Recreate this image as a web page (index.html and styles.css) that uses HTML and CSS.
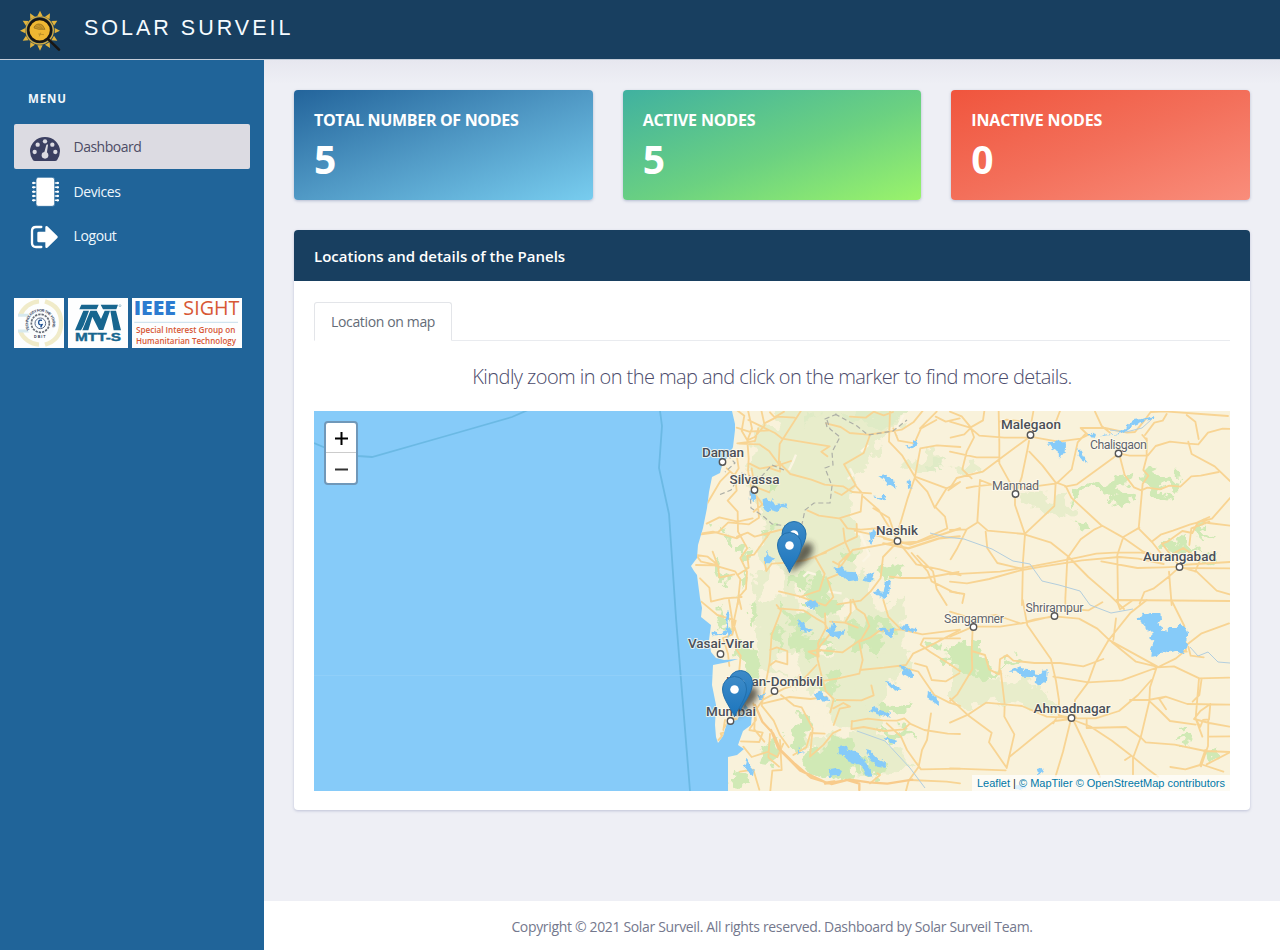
FILE: index.html
```html
<!DOCTYPE html>
<html lang="en">
<head>
<meta charset="utf-8">
<title>Solar Surveil</title>
<link rel="stylesheet" href="styles.css">
</head>
<body>
<header class="topbar">
  <svg class="logo" width="42" height="42" viewBox="0 0 126 126">
    <g fill="#e2b33c">
      <g id="rays"><path id="ray" d="M55 18 63 2 71 18z"/><use href="#ray" transform="rotate(30 63 62)"/><use href="#ray" transform="rotate(60 63 62)"/></g>
      <use href="#rays" transform="rotate(90 63 62)"/><use href="#rays" transform="rotate(180 63 62)"/><use href="#rays" transform="rotate(270 63 62)"/>
    </g>
    <circle cx="62" cy="61" r="41" fill="none" stroke="#d6ac40" stroke-width="4"/>
    <path d="m89 89 31 30" stroke="#181613" stroke-width="8" stroke-linecap="round"/>
    <circle cx="62" cy="61" r="34" fill="#efb732" stroke="#181613" stroke-width="7"/>
    <path d="M47 48q10-11 24-2l7 12H59L45 54z" fill="#c99628" stroke="#8a671d" stroke-width="2"/>
    <path d="m49 49 22 8M57 43l14 13M58 72l17 2m-10-6-4 11" stroke="#a67f24" stroke-width="2" fill="none"/>
  </svg>
  <span class="brand">SOLAR SURVEIL</span>
</header>
<div class="shell">
  <nav class="sidebar">
    <div class="menu-title">MENU</div>
    <a class="item active">
      <svg width="32" height="28" viewBox="0 0 96 84"><path d="M12 79Q3 65 3 52A45 43 0 0 1 93 52q0 13-9 27-2 2-6 2H18q-4 0-6-2z" fill="#3b3f61"/><g fill="#dcdbe2"><circle cx="17" cy="54" r="6.500"/><circle cx="26" cy="32" r="6.500"/><circle cx="48" cy="22" r="6.500"/><circle cx="70" cy="32" r="6.500"/><circle cx="79" cy="54" r="6.500"/><circle cx="48" cy="64" r="10"/><path d="m45 58 7-25q3-4 5 0l-4 28z"/></g></svg>
      <span>Dashboard</span></a>
    <a class="item">
      <svg width="32" height="30" viewBox="0 0 96 90"><g stroke="#fff" stroke-width="4.5" stroke-linecap="round"><path d="M11 18h77M11 31h77M11 44h77M11 57h77M11 70h77"/></g><g fill="#fff"><circle cx="14" cy="18" r="3.500"/><circle cx="14" cy="31" r="3.500"/><circle cx="14" cy="44" r="3.500"/><circle cx="14" cy="57" r="3.500"/><circle cx="14" cy="70" r="3.500"/><circle cx="86" cy="18" r="3.500"/><circle cx="86" cy="31" r="3.500"/><circle cx="86" cy="44" r="3.500"/><circle cx="86" cy="57" r="3.500"/><circle cx="86" cy="70" r="3.500"/></g><rect x="21" y="1" width="56" height="87" rx="8" fill="#fff" stroke="#206499" stroke-width="2"/></svg>
      <span>Devices</span></a>
    <a class="item">
      <svg width="32" height="28" viewBox="0 0 96 84"><path d="M37 12H21Q9 12 9 24v36q0 12 12 12h16" fill="none" stroke="#fff" stroke-width="7" stroke-linecap="round"/><path d="M25 30q0-4 4-4h20V12q1-5 6-2l30 29q3 3 0 6L55 74q-5 3-6-2V58H29q-4 0-4-4z" fill="#fff"/></svg>
      <span>Logout</span></a>
    <div class="partners">
      <svg width="50" height="50" viewBox="0 0 150 150"><path fill="#fdfefe" d="M0 0h150v150H0z"/><path d="M75 10A66 66 0 0 0 18 53M18 99a66 66 0 0 0 57 41M93 10q46 14 48 58v14q-3 44-48 58" fill="none" stroke="#f0ebc9" stroke-width="13"/><path d="M12 52h46M12 99h46" stroke="#d7e9ee" stroke-width="9"/><circle cx="79" cy="76" r="44" fill="#fbfcfc"/><path id="ring" d="M47 96A37 37 0 1 1 111 96" fill="none"/><text class="seal"><textPath href="#ring" textLength="146">TECHNOLOGY FOR THE YOUNG</textPath></text><text class="seal" x="60" y="121">D B I T</text><circle cx="79" cy="76" r="27" fill="none" stroke="#676d78" stroke-width="5" stroke-dasharray="7 3"/><circle cx="79" cy="76" r="16" fill="#f8fcff" stroke="#5d6c8a" stroke-width="3"/><path d="M84 67q-10-3-10 7 0 8 10 6l-4 8" fill="none" stroke="#174b91" stroke-width="4"/></svg>
      <svg width="60" height="50" viewBox="0 0 180 150"><path fill="#fdfefe" d="M0 0h180v150H0z"/><g fill="#17668f"><path d="M40 20h52l-6 14H34z"/><path d="M46 38h17L47 82l-8 15H21zM67 38h19l13 25 11-25h16l-20 58H93L73 56 61 97H43z"/><path d="M98 20h52l-5 14h-40zM127 38h17l15 59h-22z"/></g><text class="mtt" x="21" y="129" textLength="138" lengthAdjust="spacingAndGlyphs">MTT-S</text><circle cx="156" cy="23" r="3" fill="none" stroke="#17668f"/></svg>
      <svg width="110" height="50" viewBox="0 0 330 150"><path fill="#fdfefe" d="M0 0h330v150H0z"/><text class="ieee" x="5" y="50" textLength="127" lengthAdjust="spacingAndGlyphs">IEEE</text><text class="sight" x="154" y="50" textLength="168" lengthAdjust="spacingAndGlyphs">SIGHT</text><path d="M7 73h311" stroke="#aacbe2" stroke-width="2"/><text class="small" x="12" y="106" textLength="298" lengthAdjust="spacingAndGlyphs">Special Interest Group on</text><text class="small" x="12" y="137" textLength="300" lengthAdjust="spacingAndGlyphs">Humanitarian Technology</text></svg>
    </div>
  </nav>
  <div class="page">
    <main class="content">
      <section class="stats">
        <div class="stat blue"><h2>TOTAL NUMBER OF NODES</h2><b>5</b></div>
        <div class="stat green"><h2>ACTIVE NODES</h2><b>5</b></div>
        <div class="stat red"><h2>INACTIVE NODES</h2><b>0</b></div>
      </section>
      <section class="panel">
        <h3 class="panel-head">Locations and details of the Panels</h3>
        <div class="panel-body">
          <div class="tabs"><span class="tab">Location on map</span></div>
          <p class="hint">Kindly zoom in on the map and click on the marker to find more details.</p>
          <div class="map">
<svg class="tiles" width="916" height="380" viewBox="314 411 916 380">
<defs>
  <linearGradient id="pin" x2="0" y2="1"><stop stop-color="#3d8bc8"/><stop offset="1" stop-color="#1b75bd"/></linearGradient>
  <filter id="soft" x="-80%" y="-80%" width="260%" height="260%"><feGaussianBlur stdDeviation="3"/></filter>
  <filter id="rough" x="0" y="0" width="100%" height="100%"><feTurbulence type="fractalNoise" baseFrequency=".07" numOctaves="3" seed="4"/><feDisplacementMap in="SourceGraphic" scale="26" xChannelSelector="R" yChannelSelector="G"/></filter>
  <filter id="rough-lake" x="0" y="0" width="100%" height="100%"><feTurbulence type="fractalNoise" baseFrequency=".22" numOctaves="2" seed="9"/><feDisplacementMap in="SourceGraphic" scale="5" xChannelSelector="R" yChannelSelector="G"/></filter>
  <g id="marker"><path d="M12.500 40.500C11 35 .5 23.500 .5 13A12 12.500 0 0 1 24.500 13C24.500 23.500 14 35 12.500 40.500z" fill="url(#pin)" stroke="#226fab"/><circle cx="12.500" cy="13.500" r="4.300" fill="#fff"/></g>
  <path id="shade" d="M12 40Q17 21 25 12q11-4 11 5-1 11-23 23z" fill="#332e26" opacity=".75" filter="url(#soft)"/>
  <path id="coast" d="M732 400V411l3 13 0 6-2 17-4 9-6 6-3 11-8 4-3 15-2 16-4 20-5 17-1 13-6 8 3 5 3 4 1 8 2 15 2 10-1 9 10 8-2 15 2 12 5 6 8 2 14-1-10 3-15 3-1 20 4 20-1 20 1 12 2 6 5-7 4-13 10-3 5-8 3-8 7 10-1 11-8 6-5 14 6 4-7 6-9 2V810H1250V400z"/>
  <clipPath id="land"><use href="#coast"/></clipPath>
</defs>
<path fill="#86cbf9" d="M314 411h916v380H314z"/>
<path d="M314 443l14 6 30 7 14 1 74-21 66-19 16-7M660 411l2 15-3 42 10 46 7 104 14 173" fill="none" stroke="#6bb9e4" stroke-width="1.800"/>
<path d="M314 675.500h400" stroke="#95d1f9" stroke-width=".7"/>
<use href="#coast" fill="#f9f2db"/>
<g clip-path="url(#land)">
  <g filter="url(#rough)">
  <path d="M680 390h580v430H680z" fill="none"/>
  <g fill="#e8edcb">
    <path d="M775 395h130l-5 32-20 8-6 18-20 27-4 34 11 26 2 35 20 37 22-17 2 42-20 44-10 55-38-10-32-40-46-15-8-70 10-70-15-60 8-42 24-6z"/>
    <path d="M1025 491l35 6 15 16-10 8-20-10-23-8zM950 648l30 4 12 23 35 8 22 10 10 22-53-12-40 5-16-9zM857 660l50-13 5 17-40 40-20-10zM950 468l22-7 14 9-20 4zM905 466l29-13 15 6-20 15zM805 740l70-10 40 30-20 15-70-5z"/>
  </g>
  <g fill="#f9f2db"><path d="M770 560l14 8-4 30-18 6zM795 590l16-6 12 20-22 12zM812 636l22 5-4 18-25-6zM778 650l18-2 8 30-22 8zM838 600l14 5-6 22-16-8zM850 560l14-10 8 18-14 8zM780 700l26 14-8 24-20-4zM817 690l14 4-4 30-12-8z"/></g>
  <g transform="translate(670 405) scale(.333333)" fill="#d0e9b5">
    <path d="M141 354l24 8 6 23-35-6zM205 420l39 9-18 31-32-10zM150 450l18 5-12 42 20 34-29 23-8-40zM170 390l22 13-20 14zM225 500l13-6-4 49-20 15zM268 370l28-8 18 15-8 18-24-4zM370 510l48-12 8 36-34 20-36-9zM408 570l70 12-8 18-80-2zM627 490l58-30 12 22-10 35-42 10-7-16-15 4zM508 434l40-14 14 27-8 24-45-8zM300 220l40 15-20 30-33-3zM455 500l35 30-15 50-50 10-18-30z"/>
    <path fill="#dfebc6" d="M505 25l50-5 52 2 60-10 38 20-34 35-20 3-48-8-10-10-49-6zM770 174l64-19-10 40-10-14-25 28-20-6zM420 30l22-5-5 14-23 27z"/>
  </g>
  <g transform="translate(670 600) scale(.333333)" fill="#d0e9b5">
    <path d="M149 10l14 35 20 55-25-8-15-50zM198 118l43 18 42 55-18 48-38-21-32-40zM244 0l22 30-18 30-9-29zM330 20l85 30-10 62-35-12-22-50zM317 85l30 10-19 55-9-10zM360 100l60 10 70 10-20 45-40 10-54-16zM458 230l46-20 7 25-18 50-37-13zM390 320l32 50-8 75-28 12-35-49 25-38zM286 425l29-8 24 57-52 33-21-25zM186 515l45 23-25 32-26-3zM440 450l60-40 42 8 5 28 20 25 12 33-35 20-70 7-35-6-28-9-16-30zM570 480l60 5 20 30-40 15zM540 90l60-43 24 24 36-14 7 25-40 26 17 15-25 31-60-8zM607 325l56-12 61 10-53 30zM760 125l47-4-6 33-44-11zM620 380l72 10 45 30-70-8zM425 0l80 0-25 50-38-20z"/>
  </g>
  <g transform="translate(950 405) scale(.333333)" fill="#d0e9b5">
    <path d="M370 264l62-38 42 4 68-18-8 32-38 9 54 27-24 11-48-10-6-22-57-7-23 35-26 21zM572 202l24-5 26 14 76 8-16 16-35 3-8 9 31 15-9 25-39-8-22-23-22-16zM377 340l35 7 10 30-32-9zM633 411l42-12 35 6 4 20 36 8-14 13-35-10-65-5zM738 363l31-8-11 24 45 25-25-4-45-11zM770 440l42 2-27 35-24-18z"/>
  </g>
  <g transform="translate(950 600) scale(.333333)" fill="#d0e9b5">
    <path d="M-20 150l65-28 40 20 20 35 34 30 48-8-32 12-62 25-50-22-17-26-36 8zM678 382l25-7 18 7-33 15zM667 418l36-8 13 18-21 8zM766 440l30 12-4 40-17-7zM155 187l44-8 20 15-52 11z"/>
  </g>
  </g>
  <g transform="translate(670 405) scale(.333333)" fill="none" stroke="#fbf5e3" stroke-width="7">
    <path d="M357 195l12-24 9-22M555 380l18 10 25 60-20 20M540 190l10 20-17 12M400 515l14-13 24 7M475 560l40 5M700 30l-20 42M595 120l-22 20"/>
  </g>
  <!-- roads, north-west -->
  <g class="roads" transform="translate(670 405) scale(.333333)">
    <path d="M200 15l23 17-8 45 17 29 4 55-2 35 10 55 18 32 5 55-30 20-62-6-30 29-51 7M234 16l12 55-14 35 22-10 30-35-10-45M235 45l80 39 22 17 142 23-25 16 18 14M265 70l-10 38-48 8 61 2 30 21 28 38 3-60 63-98M283 55l40-20 51 3M200 68l37 12 60-4M202 115l42-5M239 176l30 15 55-10 39-13M325 170l36 37 63 17 40 15 55 5 28 17 56 4M170 190l25 22 5 45-27 30 30 33 1 60 28 50-21 29 20 41-3 52-22 25 8 35M180 200l-30 30-38 65M200 150l6 40-14 22M245 190l8 55 45 17M248 340l-45 10-55-13-38 19M251 320l27-22-21-28M201 395l32-12 21 12 75-20 28-5M78 450l35 5 32 26-52-11zM78 480l55 1 62 18 16 24-8 75M95 385l34-5 72 20 19-12M128 440l16 43 4 35 45-10M90 520l28 28 5 42 40-10 52-4M302 380l-50 69-20 4 4 35-34 22M284 470l5 28 16-22 50-3 53-8 24-8 90-44 39-18-1-38M468 55l44 11 27 18 56 5 35-5 65-10 35-22 30-37M540 35l47 3 24-18 30 11 28-10M600 90l-19 54-59 34 17 30 18 32-42 30-20-9M555 240l22 25-5 55-65 20-60-8-35-16M510 340l22 30 41 4 60-5M520 370l5 40 15 33-32 30-4 35-32 13 18 55-23 26-78-28-62-15M660 20l-3 90 40 42 38 64-22 64-35 119M735 215l95 35 40-19M735 215l16-85 50-9 70 5M670 70l15 37 48 8 20-45 46-25M750 70l50-50M797 35l30 15 42-10M830 250l-36 58-22-48-37-40M795 305l30 30 7 35-89 40-57 4-52-19-80-18M870 231l-35 25M685 410l54 68 70 15 63 18M685 408l-46 48-7 63-30 40-30 28-70 11M686 406l-27-37-33-54-46-40M610 310l47 28 24 70M685 410l-137 25-35 48-24-13M725 444l48 55 12 30 60 30 23 6M660 515l34 4 72 0 100-18M830 600l-30-48-11-53-47-47M405 465l30-9 29 50-15 50-60 20M430 456l38-13M330 170l0 30-35-12M342 20l-28 17-14-15"/>
    <path d="M642 400l78 18 100-31 50-17M640 415l75 15 92-30 62-6" stroke-width="7"/>
  </g>
  <g class="roads" transform="translate(670 600) scale(.333333)">
    <path d="M94 5l48 40 55 17-10 42-28 10 15 48 4 36M177 0l8 50 3 50M205 0l-15 70 17 56-13 15 18 26-4 42M320 15l13 17-28 73-6 82-13 70-11 60 36 45 18 42 27 38M300 150l20-8 32 11 0 40-35-10-20 15M325 25l75 6 38 24 25 14 18 32-40 48 2 30 12 50 13 46 23 22-10 40M465 40l2 45-23 45 2 40-30-15 31-5 71 7 56-39 24-40-14-35-24-17-11-27M480 65l45 3 38 15M525 68l17-29 0-39M568 130l10 50-10 41-67 15-90 15-30 2 7-27M640 0l15 50 38 38-66 5-27 20-33 13M692 88l65 15 46-6 67-8M780 155l-28-21 9-19 109 0M870 90l-82 43-59 28-21 34-66 8-72 7M690 200l55 15 48 70 45 23 32 10M735 190l35 10 15 40 43 4 40-24M780 155l55 35 35 24M500 300l74 1 37-15-7-30M490 325l30-16 20 11-31 6-18 49M545 365l48-9 45 5 43 1 22-7 17 15-18 18-59 5-62-12-37 6 2-24M718 370l45 20 70 11 37 1M783 340l-12 80-15 30-10 50-30 42-8 30M650 370l43 40 18 40 25 35 17 23 117-2M280 310l79-19 63 6 48-7M333 285l40 32 22 5 33 63-8 85 41-36 28-35 22-10M440 195l-52 56-46 15-63 33-24 34-2 55 30 37M370 465l39-23 13-43 42 2M250 310l8 50-18 25M238 390l40 8-10 28-55-2M163 382l22-28 40 11M140 455l15-43 17-22 23-3M145 420l35-38M210 515l40-6 18 60M330 420l5 90-28 2-6 60M220 440l25 31 47-15 30 15 18-40M300 402l-5 70 32 28M720 540l110 5 40 5M600 550l30-25-8-5M152 400l30-8 10 15-32 16zM165 360l-5 30"/>
    <path d="M255 315l22 50 32 35 23 50 43 42 48 41 61 19 46-12 38 11 0 19M303 390l22 55 65 66 78 37 25-4M465 551l75-12 57 8 55 4 75-12" stroke-width="7" stroke="#f8cb8b"/>
  </g>
  <g class="roads" transform="translate(950 405) scale(.333333)">
    <path d="M0 20l35 14 28 34-20 20-41 10M0 50l60 18 28 24 75 6 76 0M103 18l-4 28-37 21 10 30-22 43-13 53 28 27M146 18l2 95 0 62 47 85 0 40 30 88-6 80-3 132M150 50l20-6 45 5M240 95l-86 63-56 42-78 19-20 30M240 95l85 15 66-9 23-11-22-21 73 0 66 14 24-2 31-38 16-22 42-2 190 14M237 108l-5 27-17 82-18 48M238 140l39 41 40 52-4 70-90 85 80 25 50 40 62 63 65 56 42 40M320 235l-65 9-55 5M320 235l45-42 18-81 22-24M320 233l27 10 17 35 89 82 67 38 60 42 60 18M345 245l36-7 107-78 17-15M505 145l34 7 54 0 24-29 43-13 55 6 30 2 29-35 44-12 28 1M507 145l17 65 28 37 22 9 18-8 38 5 28-11 33 3 33-31 28-2 54-11M590 100l0 57-10 38 15 17-17 24-12 135 40 40 38 48M577 90l14 16M585 90l28-37 25-6 12-20M715 110l10 37 69 37 46 44M568 368l-48 28-18 54 2 144M352 460l-6 120 0 20M352 460l40-57 42-30 22-10M0 508l150-8 107-18 115-22 67-14 67-4 67 1 75 12M0 530l51 5 67-13 94-26 64-11 120-19 111-10 58 5 76 16M90 225l-8 125 31 27 110 10M0 375l50-2 31-20M50 373l-30 60-18 30M107 380l5 50 30 44 77 18M0 140l80 17 68 0M0 560l43 7-6 27M690 486l-54-70 16-6 45-32 30 6 17-33 34-15M607 409l25-20 37-12 50-18 67-18 54-62M760 350l15 4 65 8M690 485l-30 27-50 39-27 10-14 35M657 500l8 100M690 486l50 14 60 57 39 11M736 500l14-36-50-35-30 17M718 420l6-50 54-20M690 480l150-9M690 489l150 1M690 485l-48 2-80 2-108-20M435 20l20 43 25 20M710 30l26 20 10 52M310 70l20-52M250 20l-14 75M500 585l340 3M90 225l35 14-50 5-25 5"/>
  </g>
  <g class="roads" transform="translate(950 600) scale(.333333)">
    <path d="M0 35l65 20 73-10 75 26 101-24M0 110l70-30 80 0 64-10 40-12 67-10M68 84l-3 70 2 54-45 75-22 20M65 153l40 12 12 43 30 15 3-45 21-13 19 17 63 7 77 0 70 10 60-22M152 212l12 100-1 38 30 53-17 73-6 28M218 0l14 76 71 102 15 65 9 58-1 45 40 8M320 50l67 6 55 30 37 35 142 78M350 27l66 4 41-24M590 0l-50 40-64 80-40 68-22 60-39 52-2 44 6 10M310 230l105 17 100-6 110-40 53-26 30-25-5-72-39-78M710 155l-20-5 65-50 82-30M620 200l-62-15-72-58M622 202l50-3 76 36 90-2M620 202l-20 60-2 42-25 105-24 65 0 49M747 235l-10 120 20 55M715 140l7 27 39 5M367 355l70 0 70-22 57-48 40-45M540 300l55 0 52-10 65 22 128 2M600 305l30 28 30 30 77 11M648 290l-20 7 20 31M735 355l16 25 8-20 18-2 4-46-29 20-20 25 46 12 60 11M775 360l-1 78-21 61M776 410l64-1M570 410l17 17 87 7 92 19 73 3M766 450l-16 45-44 13-45-7M840 457l-70 36M367 354l45 94 38 83M370 360l50 19 66 43 62 48 46 38 30 22M410 360l0 24 118-3 42 31M365 354l-75-4-74-32-108-10-52 35-56 25M363 357l-49 6-55 42-81 66-8 32M363 357l-24 98-22 73M0 295l52 49 73 54-8 29 52 75M0 505l167 6M540 470l-15 10M760 495l60 20M755 235l-7 50-20 20M500 0l10 28 35-25M490 120l8-65M310 370l10-18"/>
  </g>
</g>
<path d="M827 420l3 9 10 8-8 15 1 13-8 3 7 18-2 17-16 0-9 7-3 14-15 2-15-2-9-8-12-8-1-18 8-11-17-6-10 17-12 5M784 470l-12-5-10 11-19 4M827 427l-2-8 12-5M835 414l22 12 11 9 25-4 14-11M727 455l8 8-10 9" fill="none" stroke="#adafa7" stroke-dasharray="5 3" stroke-width="1.200"/>
<g fill="none" stroke="#b3cede"><path d="M930 533l15 4 19 2 28 10 21 12 17 3 12 17 17 4 21 6 10 14 21 8 22-4M857 731l28 10 25 27 15 20M1190 647l8 9 10-4 10 10 12 1M1110 430l16 2 16-4 10-9"/></g>
<g fill="#86cbf9" filter="url(#rough-lake)">
  <path d="M680 400h560v400H680z" fill="none"/>
  <path transform="translate(670 405) scale(.333333)" d="M245 255l14 18-8 18-12-8zM278 283l12-5 5 12 13-7 10 17 31-5 7 13-24-2-7 13-23-6-6 9-16-14zM708 125l20-5 1-14 10 3 1 15-14 6zM625 212l22-5 10 12 15 5 5 26-18-12-8 5-5-18-12-5zM713 225l13 8-2 18-10-5zM611 275l23 1 7-9 8 14-4 8-20-7zM590 407l12 1-4-24 11-5-4-12 14 15-7 17-8 20zM282 462l8-10-2-16 9 17 18 7-16 15-17-1zM490 485l13 5 12-5 15 15 30 2 5 22-30 5-32-24zM575 525l20-15 18-8-11 31zM612 558l13-4 12 10 7-33 19-4-6 39-17 15-18-7zM405 600l14-15 24 10-10 12z"/>
  <path transform="translate(670 600) scale(.333333)" d="M170 30l8 7-3 42 14 20-17 11-3-43zM405 12l22 3 11-12 8 14-10 10-29-6zM384 61l18 6 5 17 23 5-15 7-23-4zM465 90l15-3 8-22 13 15-6 15 31-4-20 24-26-7zM620 85l23-2 14 10 17-10-8 35-22-20zM688 79l24-5 10 10 24 4-13 8-33-6zM690 195l13 5 28 23-4 14-26-15zM641 242l28 10 26 17-22 3zM262 284l14 2 12-12-6 20-14 4zM432 282l18-7 17 15 17 13-46-3zM594 331l20-10 15 9 33 9 0 14-48-13zM774 272l12 10 21 20-1 14-35-21zM642 410l39 12-4 11-29-13zM510 440l19-3 2 12 31 5 28 38 18 37-14 1-21-34-40-12-9-18-23-5zM584 443l20 12 21 22 23 10-1 17-29-4-23-31zM383 439l5 14 15 2-19 6zM476 508l22-4 18 9-7 14-33 4zM226 345l15 5 1 18-20 2zM232 475l6 20 14 15-3 19-25-21zM125 95l20 5 30-10-8 12-42 5z"/>
  <path transform="translate(950 405) scale(.333333)" d="M293 112l23-2 10-6 7 8 15 0-1 32-14 3-6 15-1-22-20-10zM380 133l12 4 7 15 18 23-23-12-11-16zM410 90l22-7 8 13-23-2zM449 94l14-5 35-2 30-20 25-22 35-5 28-9-6 12-28 4-30 12-29 22-21 7z"/>
  <path transform="translate(950 600) scale(.333333)" d="M563 52l12-3-2-8 20 2 7-4 31 0 2 17-11 14 15 12 3 11 14 2-1-11 27 0 9-11 12 5 11 20-3 19 3 16-14 28-26-8-16 5-11-5-8 0-15 15-21 2 3-29 10-18-14-12 12-13-25-11-2-15-18-12zM175 215l36-16 11 10 32 2 0 9 19 3 6-11 14-1-2 38-10-2-12 9-15-8 6-16-43-2-17-15zM260 507l22-4-5 14-11 5zM197 555l30 3v10h-30z"/>
</g>
<g class="labels">
  <g class="city"><text x="702" y="456.500" textLength="42">Daman</text><text x="729.500" y="484" textLength="50">Silvassa</text><text x="876" y="535" textLength="42">Nashik</text><text x="1001" y="429" textLength="60">Malegaon</text><text x="1143" y="561" textLength="73">Aurangabad</text><text x="688" y="648" textLength="66">Vasai-Virar</text><text x="726" y="685.500" textLength="97">Kalyan-Dombivli</text><text x="706" y="715.500" textLength="50">Mumbai</text><text x="1033.500" y="712.500" textLength="77">Ahmadnagar</text></g>
  <g class="town"><text x="992" y="489.500" textLength="47">Manmad</text><text x="1090" y="448.500" textLength="57">Chalisgaon</text><text x="944" y="622.500" textLength="60">Sangamner</text><text x="1025.500" y="612" textLength="58">Shrirampur</text></g>
</g>
<g fill="#fff" stroke="#555" stroke-width="1.400"><circle cx="722.500" cy="462" r="3.200"/><circle cx="754.500" cy="490" r="3.200"/><circle cx="897.500" cy="541" r="3.200"/><circle cx="1030.500" cy="435" r="3.200"/><circle cx="1118.500" cy="453.500" r="3.200"/><circle cx="1015.500" cy="494" r="3.200"/><circle cx="1179.500" cy="567" r="3.200"/><circle cx="720.500" cy="654" r="3.200"/><circle cx="774.500" cy="691" r="3.200"/><circle cx="730.500" cy="721" r="3.200"/><circle cx="973.500" cy="627" r="3.200"/><circle cx="1054.500" cy="616" r="3.200"/><circle cx="1071.500" cy="718" r="3.200"/></g>
<use href="#shade" x="777" y="532"/><use href="#shade" x="722" y="676"/>
<use href="#marker" x="781.500" y="521"/><use href="#marker" x="777" y="532"/>
<use href="#marker" x="728" y="670"/><use href="#marker" x="722" y="676"/>
</svg>
            <div class="zoom"><span><svg width="13" height="13"><path d="M6.500 0v13M0 6.500h13" stroke="#000" stroke-width="2"/></svg></span><span><svg width="13" height="13"><path d="M0 6.500h13" stroke="#333" stroke-width="2"/></svg></span></div>
            <div class="credit"><a>Leaflet</a> | <a>© MapTiler</a> <a>© OpenStreetMap contributors</a></div>
          </div>
        </div>
      </section>
    </main>
    <footer class="footer"><span>Copyright © 2021 Solar Surveil. All rights reserved. Dashboard by Solar Surveil Team.</span></footer>
  </div>
</div>
</body>
</html>
```
FILE: styles.css
```css
* { box-sizing: border-box; }
body { margin: 0; height: 950px; display: flex; flex-direction: column; overflow: hidden; font-family: "Open Sans", "Noto Sans", sans-serif; font-size: 14px; color: #5b626b; background: #eeeff5; }
.topbar { height: 60px; flex: none; background: #183f60; border-bottom: 1px solid #c4cdd9; display: flex; align-items: flex-start; padding: 10px 0 0 19px; }
.logo { display: block; }
.brand { margin: 5px 0 0 23px; font: 21.5px/26px "Liberation Sans", Arial, sans-serif; letter-spacing: 3px; color: #f5fbff; white-space: nowrap; }
.shell { flex: 1; display: flex; min-height: 0; }
.sidebar { width: 264px; flex: none; background: #206499; padding: 30px 14px; }
.menu-title { padding-left: 14px; height: 34px; font-size: 11.5px; line-height: 18px; font-weight: 700; letter-spacing: .9px; color: #f2f8fc; }
.item { display: flex; align-items: center; height: 44.600px; padding: 1px 0 0 15px; gap: 12.500px; border-radius: 2px; color: #eef7fd; font-size: 14px; letter-spacing: -.4px; }
.item svg { margin-top: 2px; }
.item.active { background: #dcdbe2; color: #4c4c65; letter-spacing: -.5px; }
.partners { display: flex; gap: 4px; margin-top: 40px; }
.partners svg { display: block; overflow: visible; }
.seal { font: bold 11px "Liberation Sans", sans-serif; fill: #283451; }
.mtt { font: bold 30px "Liberation Sans", sans-serif; fill: #17668f; stroke: #17668f; stroke-width: 1px; }
.ieee { font: 800 60px "Open Sans", sans-serif; fill: #2c7bd0; }
.sight { font: 400 60px "Open Sans", sans-serif; fill: #d75735; }
.small { font: 600 27px "Open Sans", sans-serif; fill: #d75735; }
.page { flex: 1; display: flex; flex-direction: column; background: linear-gradient(#e7e7ef, #eeeff5 24px); }
.content { flex: 1; padding: 30px 30px 0; }
.stats { display: grid; grid-template-columns: repeat(3, 1fr); gap: 30px; margin-bottom: 30px; }
.stat { height: 110.400px; border-radius: 4px; padding: 18px 20px; color: #fff; box-shadow: 0 1px 3px rgba(70, 90, 140, .35); }
.stat h2 { margin: 0; font-size: 16px; line-height: 24px; font-weight: 700; letter-spacing: -.15px; }
.stat.blue h2 { letter-spacing: -.32px; }
.stat b { display: block; font-size: 39px; line-height: 54px; font-weight: 700; }
.blue { background: linear-gradient(160deg, #23649b, #5099c5 50%, #78cdef); }
.green { background: linear-gradient(160deg, #40b1a0, #6bd181 55%, #9af36b); }
.red { background: linear-gradient(160deg, #f0553d, #f36f5a 50%, #f98d7b); }
.panel { height: 580px; background: #fff; border-radius: 4px; box-shadow: 0 1px 3px rgba(70, 80, 140, .28); overflow: hidden; }
.panel-head { margin: 0; height: 51px; padding-left: 20px; background: #183f60; color: #fff; font-size: 15px; line-height: 52px; font-weight: 600; }
.panel-body { padding: 21px 20px 20px; }
.tabs { display: flex; height: 39px; border-bottom: 1px solid #e9ebef; }
.tab { height: 39px; width: 138px; padding-left: 16px; border: 1px solid #e3e5e9; border-bottom-color: #fff; border-radius: 3px 3px 0 0; font-size: 14px; line-height: 37px; white-space: nowrap; letter-spacing: -.35px; color: #646c77; }
.hint { margin: 0; height: 70px; line-height: 72px; text-align: center; font-size: 20px; font-weight: 300; white-space: nowrap; letter-spacing: -.57px; color: #4b4b6b; }
.map { position: relative; height: 380px; overflow: hidden; }
.tiles { display: block; }
.roads { fill: none; stroke: #f8d493; stroke-width: 5.5; stroke-linejoin: round; stroke-linecap: round; }
.labels { font-family: Roboto, sans-serif; stroke: rgba(255, 252, 240, .8); stroke-width: 2px; stroke-linejoin: round; }
.labels text { paint-order: stroke; }
.city { font-size: 13.500px; font-weight: 500; fill: #4b4f58; }
.town { font-size: 12.500px; fill: #60646d; }
.zoom { position: absolute; left: 10px; top: 10px; width: 34px; height: 64px; border: 2px solid #7098b9; border-radius: 4px; background: #fff; }
.zoom span { display: flex; height: 29px; align-items: center; justify-content: center; }
.zoom span:first-child { height: 30px; border-bottom: 1px solid #ccc; padding-top: 2px; }
.zoom span:last-child { padding-top: 3px; }
.credit { position: absolute; right: 0; bottom: 0; width: 258px; height: 16px; padding-left: 5px; background: rgba(255, 255, 255, .7); font: 11px/16px "Liberation Sans", sans-serif; white-space: nowrap; color: #333; }
.credit a { color: #0078a8; }
.footer { height: 49.500px; background: #fff; display: flex; align-items: center; justify-content: center; font-size: 14px; color: #74788d; letter-spacing: -.34px; padding-top: 2px; }
```
